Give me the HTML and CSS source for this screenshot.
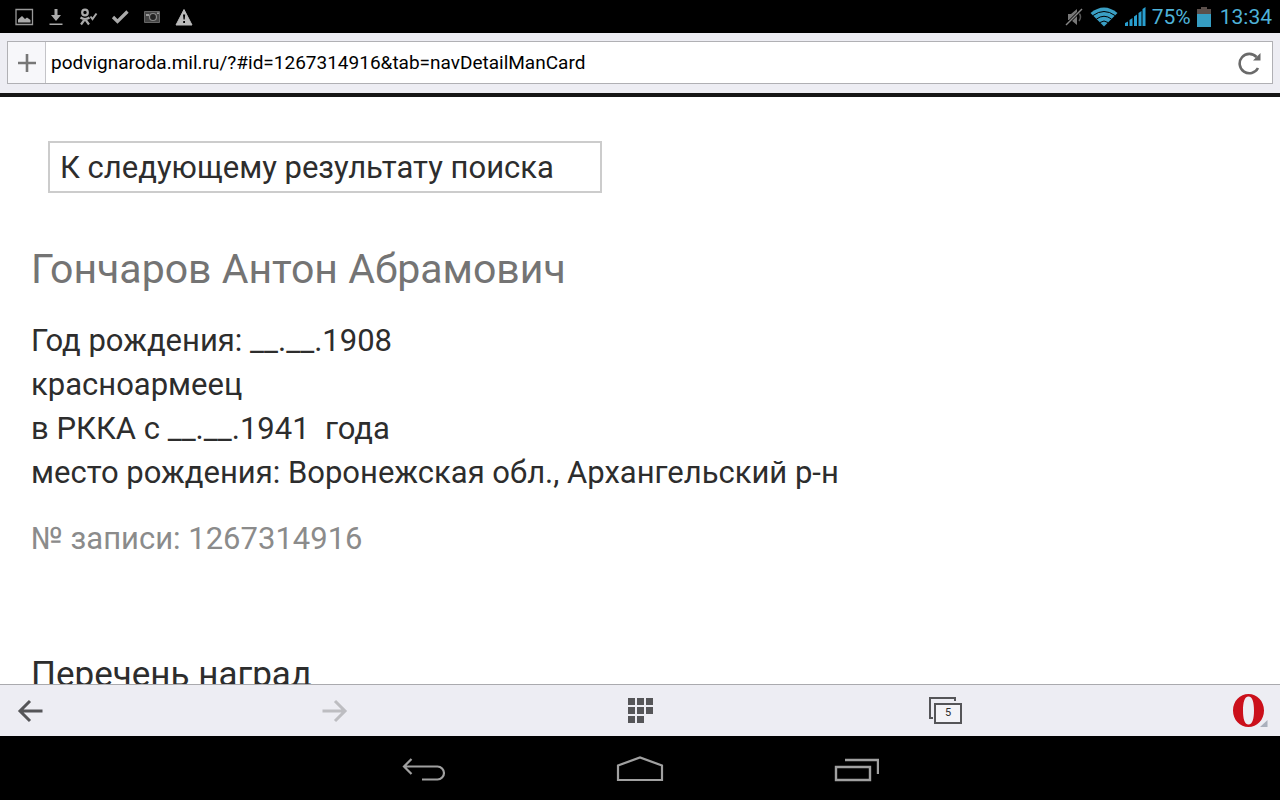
FILE: index.html
```html
<!DOCTYPE html>
<html lang="ru">
<head>
    <meta charset="UTF-8">
    <meta name="viewport" content="width=device-width, initial-scale=1.0">
    <title>Гончаров Антон Абрамович</title>
    <link rel="stylesheet" href="styles.css">
</head>
<body>
    <div class="status-bar">
        <div class="notifications">
            <svg width="20" height="20" viewBox="0 0 20 20">
                <path d="M2 2.500h16.500v15H2z" fill="none" stroke="#999" stroke-width="1.300"/>
                <path d="M4 15.500v-3l4-3.500 3 3 2-1.500 3.500 2.500v2.500z" fill="#aaa"/>
            </svg>
            <svg width="20" height="20" viewBox="0 0 20 20">
                <path d="M8.500 2h3v6h3.500l-5 6-5-6h3.500zM3.500 16.500h13v1.500h-13z" fill="#aaa"/>
            </svg>
            <svg width="20" height="20" viewBox="0 0 20 20" fill="none" stroke="#aaa" stroke-width="2.200">
                <circle cx="7" cy="5.500" r="2.800"/>
                <path d="M2.500 10.500q4.500 3 9 0M7 12l-4 5.500M7 12l4 5.500"/>
                <path d="M12.500 9.500l2 2.500 4-5.500" stroke-width="2"/>
            </svg>
            <svg width="20" height="20" viewBox="0 0 20 20">
                <path d="M3 10l4.500 4.500L17.500 4.500" fill="none" stroke="#aaa" stroke-width="3.200"/>
            </svg>
            <svg width="20" height="20" viewBox="0 0 20 20">
                <path d="M2.500 4.500h15v11h-15z" fill="#444" stroke="#666"/>
                <path d="M4 7h3v2H4zM15 5.500h2v1.500h-2z" fill="#999"/>
                <circle cx="11" cy="10" r="3.500" fill="#222" stroke="#888" stroke-width="1.200"/>
            </svg>
            <svg width="20" height="20" viewBox="0 0 20 20">
                <path d="M10 2.500L18 18H2z" fill="#bbb" stroke="#bbb" stroke-linejoin="round"/>
                <path d="M9 7.500h2.200l-.5 5h-1.200zM9.200 14h1.800v2H9.200z" fill="#000"/>
            </svg>
        </div>
        <div class="system">
            <svg width="20" height="20" viewBox="0 0 20 20">
                <path d="M4 7h3l6-5v16l-6-5H4z" fill="#777"/>
                <path d="M15 6q3 4 0 8" fill="none" stroke="#555" stroke-width="1.500"/>
                <path d="M18 2L2 18" stroke="#000" stroke-width="3"/>
                <path d="M18 2L2 18" stroke="#888" stroke-width="1.500"/>
            </svg>
            <svg width="28" height="20" viewBox="0 0 28 20">
                <path d="M14 19.500L.5 6Q14-5 27.500 6z" fill="#3a9fc4"/>
                <path d="M3 8.500q11-8 22 0M6.500 12q7.500-5.500 15 0M10 15.500q4-3 8 0" fill="none" stroke="#000" stroke-width="1"/>
            </svg>
            <svg width="22" height="20" viewBox="0 0 22 20">
                <path d="M1 19v-3l3-1.500V19zM5.500 19v-6l3-2v8zM10 19V9.500l3-2V19zM14.500 19V6l3-2v15zM18.500 19V2l3-2v19z" fill="#299fd0"/>
            </svg>
            <span>75%</span>
            <svg class="battery" width="14" height="22" viewBox="0 0 14 22">
                <path d="M4 1h6v2h4v18H0V3h4z" fill="#5b4f4b"/>
                <path d="M0 8h14v13H0z" fill="#369dc2"/>
            </svg>
            <span>13:34</span>
        </div>
    </div>

    <form class="address-bar">
        <div class="address-box">
            <button type="button" class="add-button" aria-label="Добавить">
                <svg width="18" height="18" viewBox="0 0 18 18">
                    <path d="M9 0v18M0 9h18" stroke="#777" stroke-width="2.600"/>
                </svg>
            </button>
            <input class="url" type="text" aria-label="Адрес" value="podvignaroda.mil.ru/?#id=1267314916&amp;tab=navDetailManCard">
            <button type="button" class="reload-button" aria-label="Обновить">
                <svg width="24" height="24" viewBox="0 0 24 24">
                    <path d="M21 17A9.700 9.700 0 1 1 19.500 6" fill="none" stroke="#6a6a6a" stroke-width="2.600"/>
                    <path d="M23.500 2v7.500H16z" fill="#6a6a6a"/>
                </svg>
            </button>
        </div>
    </form>

    <main class="page">
        <button type="button" class="next-result">К следующему результату поиска</button>
        <h1>Гончаров Антон Абрамович</h1>
        <p class="details">Год рождения: __.__.1908<br>
            красноармеец<br>
            в РККА с __.__.1941&nbsp; года<br>
            место рождения: Воронежская обл., Архангельский р-н</p>
        <p class="record">№ записи: 1267314916</p>
        <h2>Перечень наград</h2>
    </main>

    <div class="toolbar">
        <button type="button" aria-label="Назад">
            <svg width="26" height="24" viewBox="0 0 26 24">
                <path d="M25.500 12H3M13 2L3 12l10 10" fill="none" stroke="#555558" stroke-width="3"/>
            </svg>
        </button>
        <button type="button" aria-label="Вперёд">
            <svg width="26" height="24" viewBox="0 0 26 24">
                <path d="M.5 12H23M13 2l10 10-10 10" fill="none" stroke="#bdbdc1" stroke-width="3"/>
            </svg>
        </button>
        <button type="button" aria-label="Экспресс-панель">
            <svg width="26" height="26" viewBox="0 0 26 26">
                <path d="M1 0h7v7H1zM10 0h7v7h-7zM19 0h7v7h-7zM1 9h7v7H1zM10 9h7v7h-7zM19 9h7v7h-7zM1 18h7v7H1zM10 18h7v7h-7z" fill="#555558"/>
            </svg>
        </button>
        <button type="button" class="tabs" aria-label="Вкладки: 5">
            <svg width="34" height="28" viewBox="0 0 34 28">
                <path d="M5 21H2V1h25v3" fill="none" stroke="#555558" stroke-width="2"/>
                <path d="M7 7h26v19H7z" fill="#f3f3f7" stroke="#555558" stroke-width="2"/>
            </svg>
            <span class="tab-count">5</span>
        </button>
        <button type="button" aria-label="Меню Opera">
            <svg width="36" height="36" viewBox="0 0 36 36">
                <path fill-rule="evenodd" d="M16.500 1C25 1 32 8 32 17.500S25 34 16.500 34 1 27 1 17.500 8 1 16.500 1zM16.500 3.500C12.500 3.500 11 9.500 11 17.500s1.500 14 5.500 14S22 25.500 22 17.500 20.500 3.500 16.500 3.500z" fill="#cb101b"/>
                <path d="M35.500 27v7H28z" fill="#aab0bc"/>
            </svg>
        </button>
    </div>

    <div class="nav-bar">
        <button type="button" aria-label="Назад">
            <svg width="46" height="28" viewBox="0 0 46 28">
                <path d="M10.500 5L3 12.500l7.500 7.500M3 12.500h33.500a6.500 6.500 0 0 1 0 13H21" fill="none" stroke="#a0a0a0" stroke-width="2.200"/>
            </svg>
        </button>
        <button type="button" aria-label="Домой">
            <svg width="48" height="28" viewBox="0 0 48 28">
                <path d="M2 26V11.500L24 3.500l22 8V26z" fill="none" stroke="#a0a0a0" stroke-width="2.200"/>
            </svg>
        </button>
        <button type="button" aria-label="Недавние приложения">
            <svg width="46" height="28" viewBox="0 0 46 28">
                <path d="M3 13h34v13H3zM12 6h33v14" fill="none" stroke="#a0a0a0" stroke-width="2.400"/>
            </svg>
        </button>
    </div>
</body>
</html>
```

FILE: styles.css
```css
* {
    box-sizing: border-box;
}
body {
    display: flex;
    flex-direction: column;
    height: 100vh;
    margin: 0;
    overflow: hidden;
    background-color: white;
    color: #2d2d2d;
    font-family: Roboto, "Noto Sans", sans-serif;
}
button {
    padding: 0;
    border: none;
    background: none;
    color: inherit;
    font-family: inherit;
    cursor: pointer;
}
svg {
    display: block;
}
.status-bar {
    display: flex;
    flex: none;
    align-items: center;
    justify-content: space-between;
    height: 33px;
    padding: 0 8px 0 14px;
    background-color: black;
    color: #4fb3d9;
    font-size: 21px;
}
.notifications {
    display: flex;
    gap: 12px;
}
.system {
    display: flex;
    align-items: center;
    gap: 6px;
}
.battery {
    margin-right: 3px;
}
.address-bar {
    flex: none;
    padding: 8px 7px 9px;
    border-bottom: 4px solid #151515;
    background-color: #ededf3;
}
.address-box {
    display: flex;
    height: 43px;
    border: 1px solid #b0b0b4;
    background-color: white;
}
.add-button {
    display: flex;
    align-items: center;
    justify-content: center;
    width: 38px;
    border-right: 1px solid #c4c4c8;
    background-color: #f7f7fa;
}
.url {
    flex: 1;
    min-width: 0;
    padding: 0 5px;
    border: none;
    background: none;
    color: black;
    font-family: inherit;
    font-size: 19px;
}
.reload-button {
    display: flex;
    align-items: center;
    justify-content: center;
    width: 46px;
}
.page {
    flex: 1;
    min-height: 0;
    overflow: hidden;
    padding: 44px 31px 0;
    font-size: 31px;
}
.next-result {
    display: block;
    width: 554px;
    max-width: 100%;
    height: 52px;
    margin-left: 17px;
    padding: 0 10px;
    border: 2px solid #ccc;
    font-size: 31px;
    text-align: left;
}
h1 {
    margin: 50px 0 24px;
    color: #747474;
    font-size: 41px;
    font-weight: normal;
    line-height: 52px;
}
.details {
    margin: 0;
    line-height: 44px;
}
.record {
    margin: 22px 0 88px;
    color: #8b8b8b;
    line-height: 44px;
}
h2 {
    margin: 0;
    font-size: 35px;
    font-weight: normal;
    line-height: 52px;
}
.toolbar {
    display: flex;
    flex: none;
    justify-content: space-between;
    height: 52px;
    border-top: 1px solid #aaaaae;
    background-color: #ededf3;
}
.toolbar button {
    display: flex;
    align-items: center;
    justify-content: center;
    width: 60px;
}
.tabs {
    position: relative;
}
.tab-count {
    position: absolute;
    top: 21px;
    left: 30px;
    font-size: 11px;
    line-height: 14px;
}
.nav-bar {
    display: flex;
    flex: none;
    justify-content: center;
    height: 64px;
    background-color: black;
}
.nav-bar button {
    display: flex;
    align-items: center;
    justify-content: center;
    width: 216px;
}
```
